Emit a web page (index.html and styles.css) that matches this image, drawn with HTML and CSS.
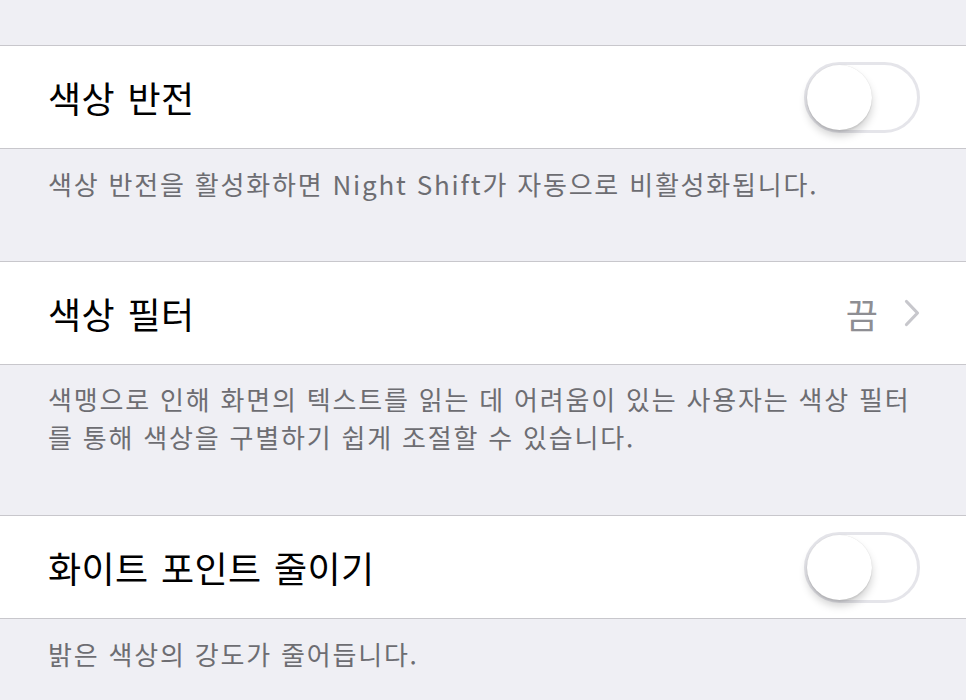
FILE: index.html
```html
<!DOCTYPE html>
<html lang="ko">
<head>
<meta charset="utf-8">
<link rel="stylesheet" href="styles.css">
</head>
<body>
<div class="page">
  <div class="spacer-top"></div>
  <div class="group">
    <div class="row">
      <span class="label">색상 반전</span>
      <span class="switch"><span class="knob"></span></span>
    </div>
  </div>
  <div class="footer f1">색상 반전을 활성화하면 Night Shift가 자동으로 비활성화됩니다.</div>
  <div class="group">
    <div class="row">
      <span class="label">색상 필터</span>
      <span class="detail">끔
        <svg class="chev" width="16" height="28" viewBox="0 0 16 28"><path d="M2.5 2.5 L13.5 14 L2.5 25.5" fill="none" stroke="#c7c7cc" stroke-width="3.2" stroke-linecap="round" stroke-linejoin="round"/></svg>
      </span>
    </div>
  </div>
  <div class="footer f2">색맹으로 인해 화면의 텍스트를 읽는 데 어려움이 있는 사용자는 색상 필터를 통해 색상을 구별하기 쉽게 조절할 수 있습니다.</div>
  <div class="group">
    <div class="row">
      <span class="label">화이트 포인트 줄이기</span>
      <span class="switch"><span class="knob"></span></span>
    </div>
  </div>
  <div class="footer f3">밝은 색상의 강도가 줄어듭니다.</div>
</div>
</body>
</html>
```
FILE: styles.css
```css
html, body {
  margin: 0;
  padding: 0;
  background: #efeff4;
}
body {
  font-family: "Noto Sans CJK KR", "Noto Sans", sans-serif;
  width: 966px;
  height: 700px;
  overflow: hidden;
}
.spacer-top {
  height: 45px;
}
.group {
  background: #fff;
  border-top: 1px solid #c8c7cc;
  border-bottom: 1px solid #c8c7cc;
}
.row {
  height: 102px;
  display: flex;
  align-items: center;
  justify-content: space-between;
  padding: 0 48px 0 48px;
}
.label {
  font-size: 36px;
  color: #000;
  letter-spacing: 0.4px;
  word-spacing: 2px;
}
.detail {
  display: flex;
  align-items: center;
  gap: 26px;
  font-size: 35px;
  color: #8e8e93;
}
.chev {
  display: block;
  margin-right: -2px;
}
.switch {
  position: relative;
  width: 116px;
  height: 71px;
  border: 3px solid #e5e5ea;
  border-radius: 38px;
  background: #fff;
  margin-right: -2px;
  box-sizing: border-box;
}
.knob {
  position: absolute;
  left: 0;
  top: 0;
  width: 65px;
  height: 65px;
  border-radius: 50%;
  background: #fff;
  box-shadow: 0 6px 8px rgba(0,0,0,0.18), 0 0 1px rgba(0,0,0,0.15), 0 2px 1px rgba(0,0,0,0.06);
}
.footer {
  font-size: 26px;
  line-height: 38px;
  letter-spacing: 1.8px;
  color: #6d6d72;
  padding: 0 36px 0 48px;
  box-sizing: border-box;
}
.f1 {
  height: 112px;
  padding-top: 16px;
}
.f2 {
  height: 150px;
  padding-top: 15px;
}
.f3 {
  height: 80px;
  padding-top: 16px;
}
```
